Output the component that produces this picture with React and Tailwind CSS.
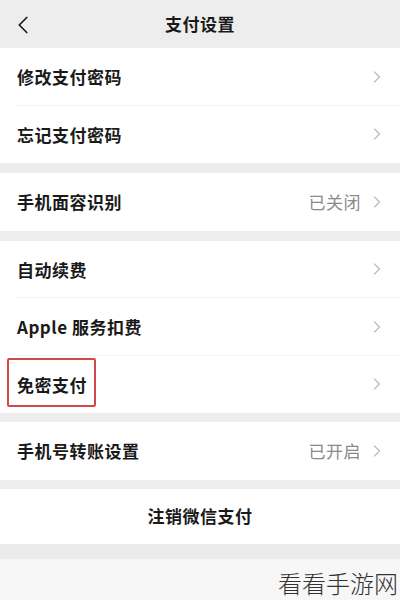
import { ChevronLeft, ChevronRight } from 'lucide-react';

const FONT = { fontFamily: '"Noto Sans CJK SC", "Noto Sans", sans-serif' };

function Row({ label, value, boxed, last }) {
  return (
    <div className="relative flex h-[57.5px] items-center pl-[17px] pr-[13px]">
      {boxed && (
        <div className="absolute left-[7px] top-[2px] h-[49px] w-[89px] rounded-[2px] border-2 border-[#d4484a]" />
      )}
      <span className="flex-1 text-[17px] font-semibold tracking-[0.5px] text-[#1a1a1a]">{label}</span>
      {value && <span className="mr-[6px] text-[17px] tracking-[0.5px] text-[#8a8a8a]">{value}</span>}
      <ChevronRight size={20} strokeWidth={1.3} className="text-[#b8b8b8]" />
      {!last && <div className="absolute bottom-0 left-[16px] right-0 h-px bg-[#f3f3f3]" />}
    </div>
  );
}

export default function App() {
  return (
    <div className="flex h-[600px] w-[400px] flex-col overflow-hidden bg-[#ededed]" style={FONT}>
      <div className="relative flex h-[48px] shrink-0 items-center justify-center">
        <ChevronLeft size={30} strokeWidth={1.4} className="absolute left-[8px] top-[10px] text-[#1a1a1a]" />
        <span className="text-[17px] font-bold tracking-[0.5px] text-[#1a1a1a]">支付设置</span>
      </div>

      <div className="bg-white">
        <Row label="修改支付密码" />
        <Row label="忘记支付密码" last />
      </div>

      <div className="mt-[10px] bg-white">
        <Row label="手机面容识别" value="已关闭" last />
      </div>

      <div className="mt-[10px] bg-white">
        <Row label="自动续费" />
        <Row label="Apple 服务扣费" />
        <Row label="免密支付" boxed last />
      </div>

      <div className="mt-[9px] bg-white">
        <Row label="手机号转账设置" value="已开启" last />
      </div>

      <div className="mt-[9px] flex h-[55px] items-center justify-center bg-white">
        <span className="text-[17px] font-semibold tracking-[0.5px] text-[#1a1a1a]">注销微信支付</span>
      </div>

      <div className="h-[15px] shrink-0 bg-[#ebebeb]" />
      <div className="flex flex-1 items-end justify-end bg-[#f7f7f7] pb-[4px] pr-[2px]">
        <span className="text-[24px] font-light leading-[26px] text-[#333]">看看手游网</span>
      </div>
    </div>
  );
}
